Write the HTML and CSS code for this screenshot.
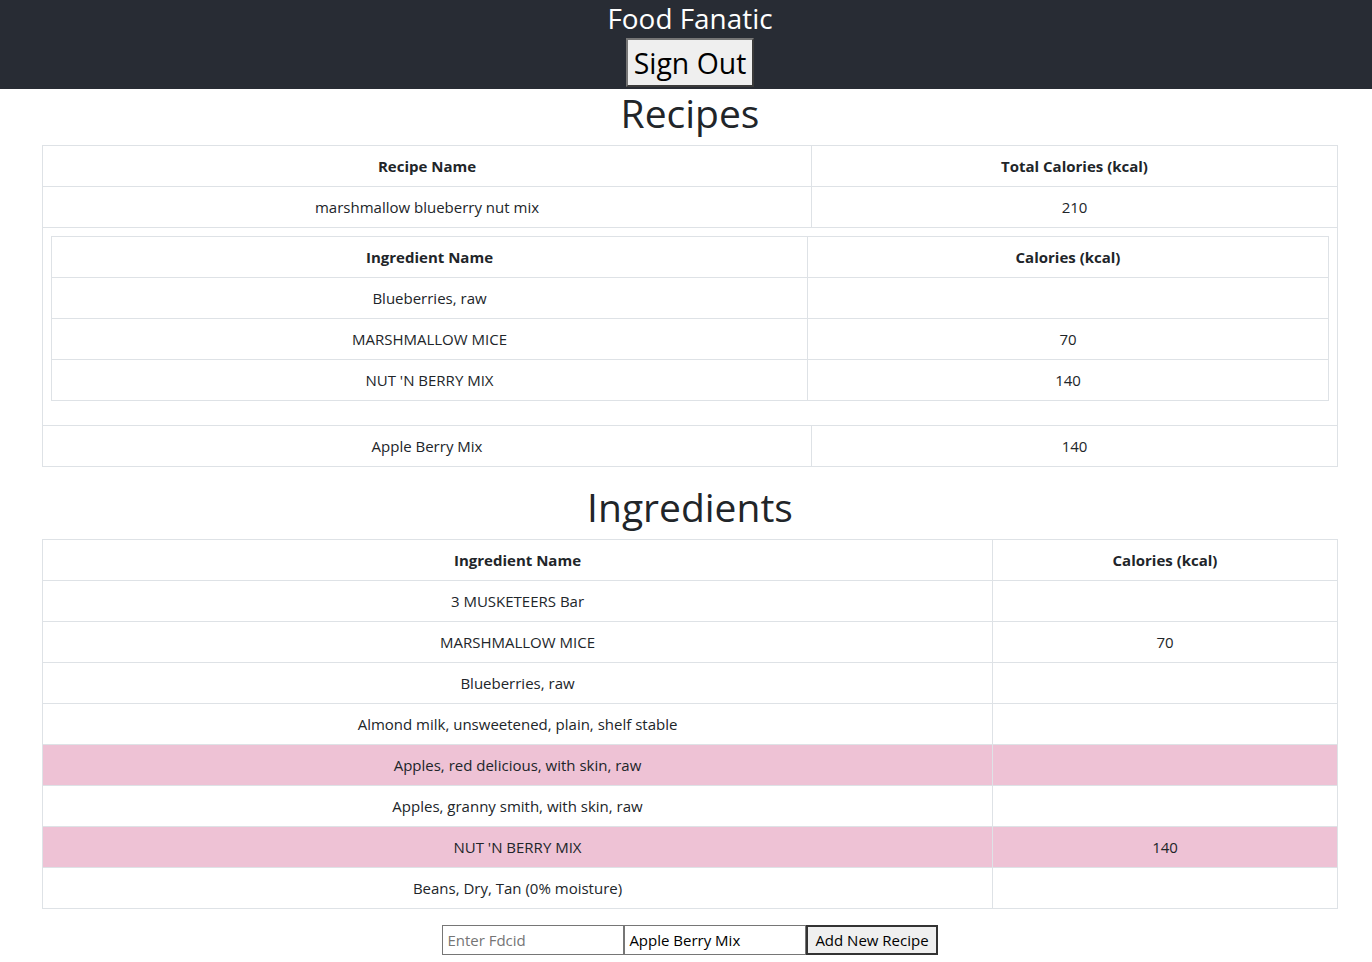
FILE: index.html
```html
<!DOCTYPE html>
<html>
<head>
<meta charset="utf-8">
<link rel="stylesheet" href="styles.css">
</head>
<body>
<header class="app-header">
  <div class="title">Food Fanatic</div>
  <button class="sign-out">Sign Out</button>
</header>
<main class="content">
  <h1 class="heading">Recipes</h1>
  <table class="grid recipes">
    <thead>
      <tr><th class="c-recipe">Recipe Name</th><th>Total Calories (kcal)</th></tr>
    </thead>
    <tbody>
      <tr><td>marshmallow blueberry nut mix</td><td>210</td></tr>
      <tr>
        <td colspan="2" class="nest-cell">
          <table class="grid inner">
            <thead>
              <tr><th class="c-inner">Ingredient Name</th><th>Calories (kcal)</th></tr>
            </thead>
            <tbody>
              <tr><td>Blueberries, raw</td><td></td></tr>
              <tr><td>MARSHMALLOW MICE</td><td>70</td></tr>
              <tr><td>NUT 'N BERRY MIX</td><td>140</td></tr>
            </tbody>
          </table>
        </td>
      </tr>
      <tr><td>Apple Berry Mix</td><td>140</td></tr>
    </tbody>
  </table>

  <h1 class="heading">Ingredients</h1>
  <table class="grid ingredients">
    <thead>
      <tr><th class="c-ingr">Ingredient Name</th><th>Calories (kcal)</th></tr>
    </thead>
    <tbody>
      <tr><td>3 MUSKETEERS Bar</td><td></td></tr>
      <tr><td>MARSHMALLOW MICE</td><td>70</td></tr>
      <tr><td>Blueberries, raw</td><td></td></tr>
      <tr><td>Almond milk, unsweetened, plain, shelf stable</td><td></td></tr>
      <tr class="pink"><td>Apples, red delicious, with skin, raw</td><td></td></tr>
      <tr><td>Apples, granny smith, with skin, raw</td><td></td></tr>
      <tr class="pink"><td>NUT 'N BERRY MIX</td><td>140</td></tr>
      <tr><td>Beans, Dry, Tan (0% moisture)</td><td></td></tr>
    </tbody>
  </table>

  <form class="add-form">
    <input class="field" type="text" placeholder="Enter Fdcid">
    <input class="field" type="text" value="Apple Berry Mix">
    <button class="add-btn" type="button">Add New Recipe</button>
  </form>
</main>
<div class="footer-bar"></div>
</body>
</html>
```

FILE: styles.css
```css
* { box-sizing: border-box; }
html, body { margin: 0; padding: 0; }
body {
  font-family: "Open Sans", "Noto Sans", sans-serif;
  font-size: 15px;
  line-height: 1.5;
  color: #212529;
  background: #fff;
}
.app-header {
  background: #282c34;
  color: #fff;
  height: 89px;
  padding-left: 8px;
  display: flex;
  flex-direction: column;
  align-items: center;
}
.title {
  font-size: 27.9px;
  line-height: 36px;
  height: 38px;
}
.sign-out {
  font-family: inherit;
  font-size: 28.4px;
  line-height: 42px;
  padding: 1px 6px;
  background: #efefef;
  color: #000;
  border: 2px solid;
  border-color: #767676 #3b3b3b #3b3b3b #767676;
  margin: 0;
  height: 49px;
}
.content {
  width: 1296px;
  margin: 0 0 0 42px;
  display: flex;
  flex-direction: column;
  align-items: center;
}
.heading {
  font-size: 39px;
  font-weight: 500;
  line-height: 48px;
  margin: 0 0 8px 0;
}
.grid {
  width: 100%;
  border-collapse: collapse;
  margin-bottom: 16px;
}
.grid th, .grid td {
  border: 1px solid #dee2e6;
  padding: 8px;
  text-align: center;
  vertical-align: top;
  height: 41px;
  line-height: 24px;
}
.grid th { font-weight: 700; }
.c-recipe { width: 769px; }
.c-inner { width: 756px; }
.c-ingr { width: 950px; }
.grid td.nest-cell { height: auto; }
.inner { margin-bottom: 16px; }
.pink td { background: #eec2d5; }
.add-form {
  display: flex;
  margin: 0;
}
.field {
  font-family: inherit;
  font-size: 15px;
  line-height: 24px;
  width: 182px;
  height: 30px;
  padding: 1px 4px;
  border: 1px solid #767676;
  margin: 0;
  color: #000;
}
.field::placeholder { color: #757575; }
.add-btn {
  font-family: inherit;
  font-size: 15px;
  line-height: 24px;
  height: 30px;
  padding: 0 7px;
  background: #efefef;
  color: #000;
  border: 2px solid #333;
  margin: 0;
}
.footer-bar {
  height: 6px;
  margin-top: 7px;
  background: #282c34;
}
```
